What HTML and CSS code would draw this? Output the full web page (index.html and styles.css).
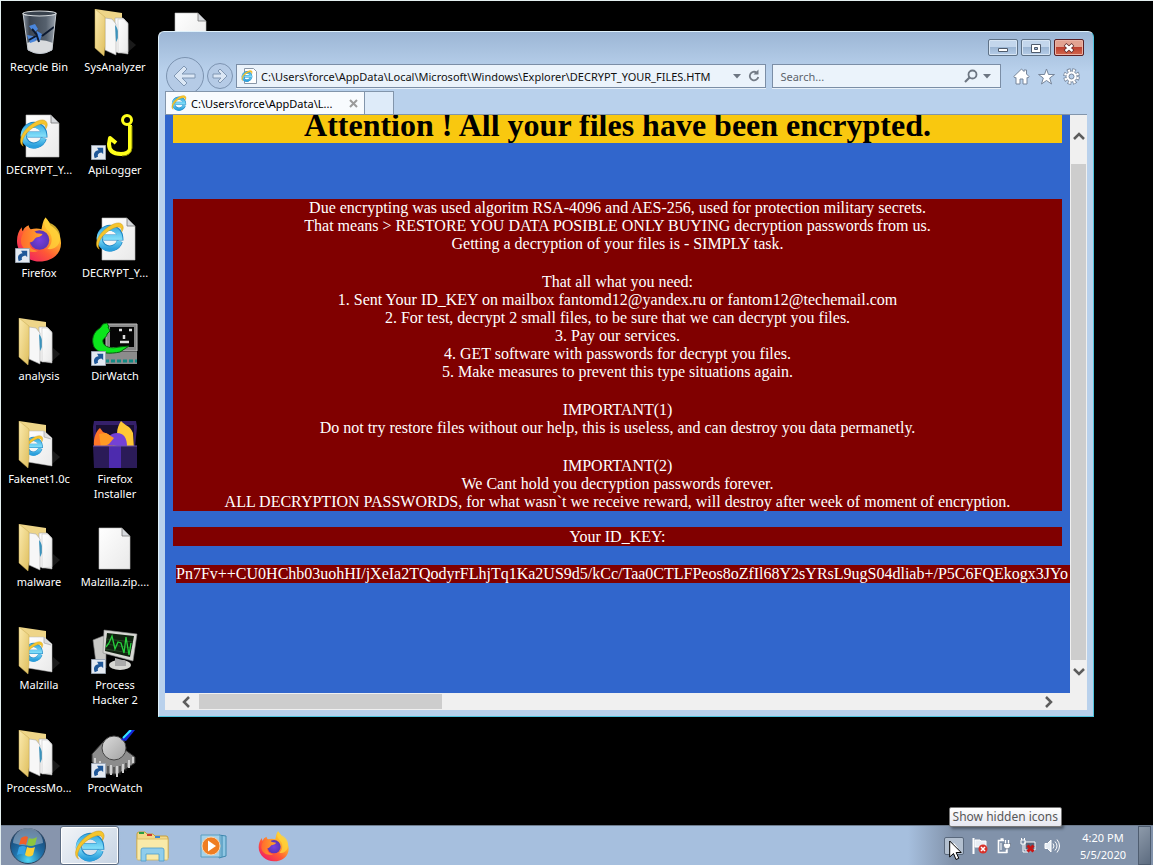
FILE: index.html
```html
<!DOCTYPE html>
<html lang="en">
<head>
<meta charset="utf-8">
<title>Desktop</title>
<link rel="stylesheet" href="styles.css">
</head>
<body>
<svg class="defs" width="0" height="0" aria-hidden="true">
  <defs>
    <linearGradient id="gFlap" x1="0" y1="0" x2="1" y2="1"><stop offset="0" stop-color="#fbeaae"/><stop offset="1" stop-color="#dfbf5e"/></linearGradient>
    <linearGradient id="gPaper" x1="0" y1="0" x2="1" y2="1"><stop offset="0" stop-color="#fff"/><stop offset="1" stop-color="#e9e9e9"/></linearGradient>
    <linearGradient id="gIe" x1="0" y1="0" x2="0" y2="1"><stop offset="0" stop-color="#3fb0e4"/><stop offset=".5" stop-color="#7fdcf8"/><stop offset="1" stop-color="#2b9fdc"/></linearGradient>
    <linearGradient id="gFox" x1="1" y1="0" x2=".2" y2="1"><stop offset="0" stop-color="#fff04a"/><stop offset=".35" stop-color="#ffb52a"/><stop offset=".65" stop-color="#ff5a35"/><stop offset="1" stop-color="#ef1b66"/></linearGradient>
    <linearGradient id="gFoxHead" x1="0" y1="0" x2="1" y2="0"><stop offset="0" stop-color="#ff6a2c"/><stop offset="1" stop-color="#ffa82b"/></linearGradient>
    <radialGradient id="gGlobe"><stop offset="0" stop-color="#7a3fe0"/><stop offset="1" stop-color="#5a35b5"/></radialGradient>
    <linearGradient id="gBin" x1="0" y1="0" x2="1" y2="0"><stop offset="0" stop-color="#87929f"/><stop offset=".2" stop-color="#3c4551"/><stop offset=".7" stop-color="#56616e"/><stop offset="1" stop-color="#9ba4ae"/></linearGradient>
    <radialGradient id="gOrb" cx=".5" cy=".9" r=".9"><stop offset="0" stop-color="#4fd6f4"/><stop offset=".45" stop-color="#1f6fa8"/><stop offset="1" stop-color="#173a63"/></radialGradient>
    <linearGradient id="gBall" x1="0" y1="0" x2="1" y2="1"><stop offset="0" stop-color="#dcdcdc"/><stop offset="1" stop-color="#a2a2a2"/></linearGradient>

    <symbol id="ie" viewBox="0 0 32 32">
      <path d="M26.500 20.500A11 11 0 1 1 27 16.500H9" fill="none" stroke="#1f86c4" stroke-width="6.400"/>
      <path d="M26.200 20.500A11 11 0 1 1 26.500 16.500H9" fill="none" stroke="url(#gIe)" stroke-width="5.400"/>
      <path d="M4.500 29C-2 25 3 13 13 6S29 0 30 5c.400 2-.500 4-1.500 5.500C29 5 25 4 18 7.500 8 12.500 1 23 4.500 29z" fill="#f6c52c" stroke="#c99412" stroke-width=".5"/>
    </symbol>
    <symbol id="page" viewBox="0 0 48 48">
      <path d="M8 4h23l8 8v33H8z" fill="url(#gPaper)" stroke="#b8b8b8" stroke-width=".6"/>
      <path d="M31 4v8h8z" fill="#d5d8dc" stroke="#777" stroke-width=".8"/>
    </symbol>
    <symbol id="htm" viewBox="0 0 48 48">
      <path d="M11 3h25l8 8v34H11z" fill="url(#gPaper)" stroke="#b8b8b8" stroke-width=".6"/>
      <path d="M36 3v8h8z" fill="#d5d8dc" stroke="#777" stroke-width=".8"/>
      <use href="#ie" x="4" y="7" width="30" height="30"/>
    </symbol>
    <symbol id="folderBack" viewBox="0 0 48 48">
      <path d="M36 44 45 36 38 30z" fill="#1a1a1a"/>
      <path d="M4 0 31 4v22L14 40z" fill="#eed588"/>
    </symbol>
    <symbol id="folderDocs" viewBox="0 0 48 48">
      <use href="#folderBack" width="48" height="48"/>
      <path d="M24 9h8l5 5v31l-13-2z" fill="#fafafa" stroke="#aaa" stroke-width=".6"/>
      <path d="M32 10v6l5 1" fill="#ddd" stroke="#aaa" stroke-width=".5"/>
      <path d="M14 9l7 1 4 5v31l-11-5z" fill="#f7f7f7" stroke="#aaa" stroke-width=".6"/>
      <path d="M24 16c5 6 4 13 1 17z" fill="#3a93bd"/>
      <path d="M27 10l6 0 4 5v28l-10 1z" fill="url(#gPaper)" stroke="#bbb" stroke-width=".5"/>
      <path d="M4 0 14 8v29l-1 10L4 39z" fill="url(#gFlap)" stroke="#c7a850" stroke-width=".5"/>
    </symbol>
    <symbol id="folderIe" viewBox="0 0 48 48">
      <use href="#folderBack" width="48" height="48"/>
      <path d="M13 10h16l8 7v28l-24-4z" fill="url(#gPaper)" stroke="#bbb" stroke-width=".5"/>
      <path d="M29 10v6l7 2" fill="#ddd" stroke="#999" stroke-width=".6"/>
      <use href="#ie" x="8" y="14" width="21" height="21"/>
      <path d="M4 0 14 8v29l-1 10L4 39z" fill="url(#gFlap)" stroke="#c7a850" stroke-width=".5"/>
    </symbol>
    <symbol id="shortcut" viewBox="0 0 16 16">
      <path d="M.5.5h15v15H.500z" fill="#e3e9f1" stroke="#9aa4b2"/>
      <path d="M4 14C2 9 4 6 8 5.500L6.500 3H13v6.500L11 8C8 8.500 6.500 10 7.500 12.500z" fill="#1f5798"/>
    </symbol>
    <symbol id="fox" viewBox="0 0 48 48">
      <path d="M30 2c3 3 4 5 5 8 5 3 11 9 11 18 0 12-10 19-22 19S1 38 1 26c0-6 2-11 5-14 0 2 0 3 1 4 1-3 3-5 6-6 0 2 1 3 2 4 4-1 8-1 11 0 1-4 1-8 4-12z" fill="url(#gFox)"/>
      <circle cx="24" cy="25" r="10" fill="url(#gGlobe)"/>
      <path d="M8 17c4-3 9-3 13 1l6 1c-1 3-5 3-7 4-2 2-3 5-6 4-1 5 3 9 9 9-9 4-18-2-18-10 0-3 1-6 3-9z" fill="url(#gFoxHead)"/>
      <path d="M30 2c-3 8 1 12 4 15 4 5 3 13-2 17 8 2 14-5 13-13 0-6-5-11-10-13-2-2-3-4-5-6z" fill="#ffd23a" opacity=".8"/>
    </symbol>
    <symbol id="foldersTask" viewBox="0 0 34 32">
      <path d="M2 4q0-2 2-2h6l2 2h6l2 2h11q2 0 2 2v20H2z" fill="#f2d98a" stroke="#c79f3b"/>
      <path d="M4 3h5" stroke="#2a9d3f" stroke-width="2"/><path d="M12 5h5" stroke="#d0392b" stroke-width="2"/><path d="M20 7h5" stroke="#3a86d1" stroke-width="2"/>
      <path d="M2 9h31v20q0 1-1 1H3q-1 0-1-1z" fill="#f9eaa9" stroke="#d6b55c" stroke-width=".8"/>
      <path d="M6 31V20q0-2 2-2h19q2 0 2 2v11h-5v-7H11v7z" fill="#8fcdec" stroke="#4c9ccc" stroke-width=".8"/>
    </symbol>
  </defs>
</svg>

<div class="screen">
  <main class="desktop">
    <div class="icons">
      <div class="item"><svg class="ico" viewBox="0 0 48 48"><path d="M8 4h33l-4 37q-12 8-24 0z" fill="url(#gBin)"/><path d="M12 34q12-6 26 0l-1 7q-12 7-24 0z" fill="#d8dadd"/><path d="M14 17l6-2 3 5-4 4zM22 22l5 3-2 7-6-2zM12 26l6 1 3 5-6 2z" fill="#4a86dc"/><path d="M17 20l5 6M14 31l7-4M24 33l-3-9M27 27l12-9" stroke="#0d1a30" stroke-width="2"/><path d="M8 4l5 37q12 7 24 0l4-37" fill="none" stroke="#c3c9cf"/><ellipse cx="24.500" cy="4.500" rx="16.500" ry="2.500" fill="#39424d" stroke="#d6dadd" stroke-width="1.200"/></svg><span>Recycle Bin</span></div>
      <div class="item"><svg class="ico"><use href="#htm" width="48" height="48"/></svg><span>DECRYPT_Y...</span></div>
      <div class="item"><svg class="ico" viewBox="0 0 48 48"><use href="#fox" x="1" width="47" height="48"/><use href="#shortcut" y="33" width="15" height="15"/></svg><span>Firefox</span></div>
      <div class="item"><svg class="ico"><use href="#folderDocs" width="48" height="48"/></svg><span>analysis</span></div>
      <div class="item"><svg class="ico"><use href="#folderIe" width="48" height="48"/></svg><span>Fakenet1.0c</span></div>
      <div class="item"><svg class="ico"><use href="#folderDocs" width="48" height="48"/></svg><span>malware</span></div>
      <div class="item"><svg class="ico"><use href="#folderIe" width="48" height="48"/></svg><span>Malzilla</span></div>
      <div class="item"><svg class="ico"><use href="#folderDocs" width="48" height="48"/></svg><span>ProcessMo...</span></div>
      <div class="item"><svg class="ico"><use href="#folderDocs" width="48" height="48"/></svg><span>SysAnalyzer</span></div>
      <div class="item"><svg class="ico" viewBox="0 0 48 48"><g fill="none" stroke="#ffff1a" stroke-linejoin="round"><circle cx="36" cy="8" r="4.500" stroke-width="3"/><path d="M39 13v24q-1 5-9 5-12 0-12-10l1-6 6 5" stroke-width="4"/></g><path d="M41 14v22q-1 8-10 8" stroke="#8a8a00" fill="none"/><use href="#shortcut" y="33" width="15" height="15"/></svg><span>ApiLogger</span></div>
      <div class="item"><svg class="ico"><use href="#htm" width="48" height="48"/></svg><span>DECRYPT_Y...</span></div>
      <div class="item"><svg class="ico" viewBox="0 0 48 48"><path d="M15 6h31v27H15z" fill="#888" stroke="#bbb"/><path d="M19 9h24v20H19z" fill="#050505"/><path d="M28 12h3M38 12h3M33 17v4M29 24h9" stroke="#ddd" stroke-width="2.500"/><path d="M14 34h32v12H14z" fill="#8c8c8c"/><path d="M14 43h32" stroke="#118a84" stroke-width="3" stroke-dasharray="4 2"/><path d="M18 9l-2-4-4 1-3 4C2 14 0 22 3 29c4 7 17 7 26 5l9-6-10 1c-8 2-15 0-16-5-1-4 4-4 4-8l3-3-2-4z" fill="#0be51c" stroke="#065e0c"/><use href="#shortcut" y="33" width="15" height="15"/></svg><span>DirWatch</span></div>
      <div class="item"><svg class="ico" viewBox="0 0 48 48"><path d="M3 0h42l1 6-2 20H3l-1-20z" fill="#35206b"/><path d="M5 4h38v22H5z" fill="#190f35"/><path d="M3 26C2 16 6 9 9 7l3 4 5 2 8 6v9z" fill="#ff7528"/><path d="M22 26c-1-8 1-11 4-13 0-6 2-10 4-13 4 5 9 4 12 12l1 16z" fill="#ffc835"/><path d="M16 24q0-12 10-12t10 14z" fill="#7441d6"/><path d="M8 13l7-1 8 5-5 6-8 4z" fill="#ff9a24"/><path d="M2 25h44v22H3z" fill="#2b1b58"/><path d="M18 25h12v22H18z" fill="#4d2bae"/><path d="M2 25h44" stroke="#6a55a8"/></svg><span class="wrap">Firefox Installer</span></div>
      <div class="item"><svg class="ico"><use href="#page" width="48" height="48"/></svg><span>Malzilla.zip....</span></div>
      <div class="item"><svg class="ico" viewBox="0 0 48 48"><path d="M2 13l10-4 3 1v31l-9 3z" fill="#c9c9c6" stroke="#777" stroke-width=".6"/><ellipse cx="29" cy="38" rx="11" ry="5" fill="#d7d7d3"/><path d="M24 31l11 3v5H24z" fill="#aaa"/><path d="M13 3l33 4-4 27-30-8z" fill="#d8d8d4" stroke="#888" stroke-width=".6"/><path d="M16 6l27 3-4 21-25-6z" fill="#10210f"/><path d="M15 12l27 3M15 17l26 4M14 22l25 4" stroke="#2a4d29" stroke-width=".8"/><path d="M15 20l3-4 3-7 3 13 3-7 3 1 3 10 2-16 3 18 2-12" fill="none" stroke="#26d13c" stroke-width="1.300"/><use href="#shortcut" y="32" width="15" height="15"/></svg><span class="wrap">Process Hacker 2</span></div>
      <div class="item"><svg class="ico" viewBox="0 0 48 48"><path d="M12 12L1 24v8l14 12h12l17-11v-6l-11-8z" fill="#8c8c8c" stroke="#333"/><path d="M4 28v6M9 31v6M14 34v8M20 35v10M26 36v11M32 34v9M38 30v8M42 27v6" stroke="#d0d0d0" stroke-width="2"/><path d="M17 36v8M23 37v9M29 36v9M35 33v8" stroke="#222"/><circle cx="23" cy="18" r="12" fill="url(#gBall)" stroke="#444"/><path d="M30 10L38 0h6l-9 11z" fill="#1326dc"/><path d="M32 8L40 0" stroke="#32e7ff" stroke-width="2"/><use href="#shortcut" y="33" width="15" height="15"/></svg><span>ProcWatch</span></div>
      <div class="item"><svg class="ico"><use href="#page" width="48" height="48"/></svg></div>
    </div>

    <section class="window" aria-label="Internet Explorer">
      <header class="titlebar">
        <button class="cap" aria-label="Minimize"><svg width="12" height="12" viewBox="0 0 12 12"><path d="M1.500 6.500h9v3h-9z" fill="#fff" stroke="#4f5b6c"/></svg></button>
        <button class="cap" aria-label="Restore"><svg width="12" height="12" viewBox="0 0 12 12"><path d="M1.500 2.500h9v8h-9z" fill="#fff" stroke="#4f5b6c"/><path d="M4.500 5.500h3v2h-3z" fill="#9db7d6" stroke="#4f5b6c"/></svg></button>
        <button class="cap close" aria-label="Close"><svg width="12" height="12" viewBox="0 0 12 12"><path d="M2 2.500l8 7M10 2.500l-8 7" stroke="#5e2a2a" stroke-width="4"/><path d="M2.500 3l7 6M9.500 3l-7 6" stroke="#fff" stroke-width="2.400"/></svg></button>
      </header>
      <nav class="navbar">
        <button class="round" aria-label="Back"><svg width="38" height="38" viewBox="0 0 38 38"><circle cx="19" cy="19" r="18.500" fill="#b5cbe6" stroke="#7c93b0"/><path d="M8 19l10-10 3 3-5 5h13v4H16l5 5-3 3z" fill="#dbe7f5" stroke="#8097b3"/></svg></button>
        <button class="round" aria-label="Forward"><svg width="26" height="26" viewBox="0 0 26 26"><circle cx="13" cy="13" r="12.500" fill="#b5cbe6" stroke="#7c93b0"/><path d="M20 13l-7-7-2 2 3 3H6v4h8l-3 3 2 2z" fill="#dbe7f5" stroke="#8097b3"/></svg></button>
        <div class="field address">
          <svg width="16" height="16" viewBox="0 0 16 16"><path d="M3.500.5h9l3 3v12h-12z" fill="#fff" stroke="#8997a8"/><use href="#ie" y="2" width="12" height="12"/></svg>
          <input aria-label="Address" value="C:\Users\force\AppData\Local\Microsoft\Windows\Explorer\DECRYPT_YOUR_FILES.HTM">
          <button class="list" aria-label="Show address list"><svg width="8" height="5" viewBox="0 0 8 5"><path d="M0 0h8L4 4.500z" fill="#6d7682"/></svg></button>
          <button aria-label="Refresh"><svg width="14" height="14" viewBox="0 0 14 14"><path d="M9.500 3.500A4.300 4.300 0 1 0 11.300 8" fill="none" stroke="#737b86" stroke-width="1.800"/><path d="M6.500 5.500h5V.500z" fill="#737b86"/></svg></button>
        </div>
        <div class="field search">
          <input aria-label="Search" placeholder="Search...">
          <button aria-label="Search"><svg width="14" height="14" viewBox="0 0 14 14"><circle cx="8.500" cy="5.500" r="4" fill="none" stroke="#6d7682" stroke-width="1.800"/><path d="M5.500 8.500L1 13" stroke="#6d7682" stroke-width="2.200"/></svg></button>
          <button aria-label="Search options"><svg width="8" height="5" viewBox="0 0 8 5"><path d="M0 0h8L4 4.500z" fill="#6d7682"/></svg></button>
        </div>
        <div class="tools">
          <button aria-label="Home"><svg width="17" height="17" viewBox="0 0 17 17"><path d="M8.500 1l2.500 2.500V2h2.500v4L16 8.500 15 10l-1-.500V16h-4v-5H7v5H3V9.500L2 10 .800 8.500z" fill="#fff" stroke="#76859a"/></svg></button>
          <button aria-label="Favorites"><svg width="17" height="17" viewBox="0 0 17 17"><path d="M8.500 1l2 5.500h6l-4.800 3.500L13.500 16l-5-3.500L3.500 16l1.800-6L.500 6.500h6z" fill="#fff" stroke="#76859a"/></svg></button>
          <button aria-label="Tools"><svg width="17" height="17" viewBox="0 0 17 17"><circle cx="8.500" cy="8.500" r="6.300" fill="none" stroke="#76859a" stroke-width="4" stroke-dasharray="3.350 1.598"/><circle cx="8.500" cy="8.500" r="5.500" fill="#fff" stroke="#76859a"/><circle cx="8.500" cy="8.500" r="6.300" fill="none" stroke="#fff" stroke-width="2.400" stroke-dasharray="2 2.948" stroke-dashoffset="-.7"/><circle cx="8.500" cy="8.500" r="2.500" fill="#b9d0ea" stroke="#76859a"/></svg></button>
        </div>
      </nav>
      <div class="tabs">
        <div class="tab"><svg width="16" height="16"><use href="#ie" width="16" height="16"/></svg><span>C:\Users\force\AppData\L...</span><button aria-label="Close tab"><svg width="9" height="9" viewBox="0 0 9 9"><path d="M1 1l7 7M8 1L1 8" stroke="#9b9b9b" stroke-width="2"/></svg></button></div>
        <button class="newtab" aria-label="New tab"></button>
      </div>
      <div class="viewport">
        <article class="page">
          <div class="banner"><h1>Attention ! All your files have been encrypted.</h1></div>
          <div class="note">
            <p>Due encrypting was used algoritm RSA-4096 and AES-256, used for protection military secrets.<br>That means &gt; RESTORE YOU DATA POSIBLE ONLY BUYING decryption passwords from us.<br>Getting a decryption of your files is - SIMPLY task.</p>
            <p>That all what you need:<br>1. Sent Your ID_KEY on mailbox fantomd12@yandex.ru or fantom12@techemail.com<br>2. For test, decrypt 2 small files, to be sure that we can decrypt you files.<br>3. Pay our services.<br>4. GET software with passwords for decrypt you files.<br>5. Make measures to prevent this type situations again.</p>
            <p>IMPORTANT(1)<br>Do not try restore files without our help, this is useless, and can destroy you data permanetly.</p>
            <p>IMPORTANT(2)<br>We Cant hold you decryption passwords forever.<br>ALL DECRYPTION PASSWORDS, for what wasn`t we receive reward, will destroy after week of moment of encryption.</p>
          </div>
          <div class="keytitle">Your ID_KEY:</div>
          <div class="key"><span>Pn7Fv++CU0HChb03uohHI/jXeIa2TQodyrFLhjTq1Ka2US9d5/kCc/Taa0CTLFPeos8oZfIl68Y2sYRsL9ugS04dliab+/P5C6FQEkogx3JYo</span></div>
        </article>
        <div class="vbar">
          <svg width="12" height="8" viewBox="0 0 12 8"><path d="M1 7l5-5 5 5" fill="none" stroke="#5c5c5c" stroke-width="2.500"/></svg>
          <div class="vthumb"></div>
          <svg width="12" height="8" viewBox="0 0 12 8"><path d="M1 1l5 5 5-5" fill="none" stroke="#5c5c5c" stroke-width="2.500"/></svg>
        </div>
        <div class="hbar">
          <svg width="10" height="12" viewBox="0 0 10 12"><path d="M8 1L3 6l5 5" fill="none" stroke="#5c5c5c" stroke-width="2.500"/></svg>
          <div class="htrack"><div class="hthumb"></div></div>
          <svg width="10" height="12" viewBox="0 0 10 12"><path d="M2 1l5 5-5 5" fill="none" stroke="#5c5c5c" stroke-width="2.500"/></svg>
        </div>
      </div>
    </section>
  </main>

  <footer class="taskbar">
    <button class="start" aria-label="Start"><svg width="38" height="38" viewBox="0 0 38 38"><circle cx="19" cy="19" r="17.500" fill="url(#gOrb)" stroke="#2c4560"/><path d="M4 16A15 15 0 0 1 34 16Q19 21 4 16z" fill="#b9c8d8" opacity=".5"/><path d="M12 11q4-3 7-1l-2 8q-3-2-7 0z" fill="#f0602a"/><path d="M20 11q4 2 8-1l-2 8q-4 2-8 0z" fill="#8cc63f"/><path d="M10 20q4-2 7 0l-2 8q-3-2-7 0z" fill="#35a3e6"/><path d="M18 20q4 2 8 0l-2 8q-4 3-8 0z" fill="#fdd034"/></svg></button>
    <button class="task active" aria-label="Internet Explorer"><svg width="32" height="32"><use href="#ie" width="32" height="32"/></svg></button>
    <button class="task" aria-label="Windows Explorer"><svg width="34" height="32"><use href="#foldersTask" width="34" height="32"/></svg></button>
    <button class="task" aria-label="Windows Media Player"><svg width="32" height="32" viewBox="0 0 32 32"><path d="M22 5l7 1v20l-7 2z" fill="#8fc7e4" stroke="#3e87ad"/><path d="M25 5v22" stroke="#3e87ad"/><path d="M4 5h19v22H4z" fill="#a5d2ea" stroke="#5b9dc0"/><circle cx="14" cy="16" r="9" fill="#ef7d22" stroke="#fbd3ab"/><path d="M11 10.500l8 5.500-8 5.500z" fill="#fff"/></svg></button>
    <button class="task" aria-label="Firefox"><svg width="32" height="32"><use href="#fox" width="32" height="32"/></svg></button>
    <div class="tray">
      <button class="hidden-icons" aria-label="Show hidden icons"><svg width="8" height="5" viewBox="0 0 8 5"><path d="M0 5h8L4 0z" fill="#fff"/></svg></button>
      <svg width="16" height="16" viewBox="0 0 16 16"><path d="M1.500 0v16" stroke="#fff" stroke-width="2"/><path d="M3 2h5l1 1h5v7H9L8 9H3z" fill="#e9eef5" stroke="#fff"/><circle cx="11" cy="11" r="4.500" fill="#d8322b"/><path d="M9 9l4 4M13 9l-4 4" stroke="#fff" stroke-width="1.500"/></svg>
      <svg width="16" height="16" viewBox="0 0 16 16"><path d="M8 2.500H2.500v12h8V12M4.500 1h3" fill="none" stroke="#fff" stroke-width="1.600"/><path d="M5 5v7" stroke="#fff"/><path d="M7.500 5.500h7v2q0 3-3.500 3.500-3.500-.500-3.500-3.500z" fill="#fff" stroke="#4f5d70" stroke-width=".6"/><path d="M9.500 5.500V2M12.500 5.500V2M11 11v4" stroke="#fff" stroke-width="1.300"/></svg>
      <svg width="16" height="16" viewBox="0 0 16 16"><path d="M5 4h10v8H5z" fill="#56647a" stroke="#fff"/><path d="M1 2h4v4H1zM3 6v8h5M1.500 0v2M4.500 0v2" fill="none" stroke="#fff"/><path d="M7.500 7.500l6 6M13.500 7.500l-6 6" stroke="#c81414" stroke-width="3"/></svg>
      <svg width="16" height="16" viewBox="0 0 16 16"><path d="M1 5.500h2.500L7 2v12l-3.500-3.500H1z" fill="#e6edf5" stroke="#fff"/><path d="M9 5.500q2 2.500 0 5M11 3.500q4 4.500 0 9M13 1.500q5 6.500 0 13" fill="none" stroke="#fff"/></svg>
      <div class="clock"><span>4:20 PM</span><span>5/5/2020</span></div>
      <button class="peek" aria-label="Show desktop"></button>
    </div>
    <div class="tip" role="tooltip">Show hidden icons</div>
    <svg class="cursor" width="13" height="21" viewBox="0 0 13 21"><path d="M.7 1v16l3.800-3.500L7 19.500l2.800-1.200-2.600-5.800h5z" fill="#fff" stroke="#000"/></svg>
  </footer>
</div>
</body>
</html>
```

FILE: styles.css
```css
* { box-sizing: border-box; }

body {
  margin: 0;
  background: #000;
  font-family: "Noto Sans", "Open Sans", sans-serif;
  font-size: 12px;
  overflow: hidden;
}

button {
  margin: 0;
  padding: 0;
  border: 0;
  background: none;
  font: inherit;
  display: flex;
  align-items: center;
  justify-content: center;
}

svg { display: block; flex: none; }
.defs { position: absolute; }

.screen {
  display: flex;
  flex-direction: column;
  height: 100vh;
  border-top: 1px solid #e4eff0;
  border-left: 1px solid #e4eff0;
}

.desktop { position: relative; flex: 1; min-height: 0; }

.icons {
  display: grid;
  grid-auto-flow: column;
  grid-template-rows: repeat(8, 103px);
  grid-auto-columns: 76px;
  justify-content: start;
  padding-top: 2px;
}

.item {
  display: flex;
  flex-direction: column;
  align-items: center;
  padding-top: 6px;
  color: #fff;
  font-size: 11px;
  line-height: 15px;
  text-align: center;
}

.item span { margin-top: 2px; white-space: nowrap; }
.item .wrap { white-space: normal; max-width: 60px; }
.ico { width: 48px; height: 48px; }

.window {
  position: absolute;
  left: 157px;
  right: 59px;
  top: 30px;
  bottom: 108px;
  display: flex;
  flex-direction: column;
  padding: 1px 6px 6px;
  border: 1px solid #dff1fb;
  border-right-color: #4fc3dd;
  border-bottom-color: #4fc3dd;
  border-radius: 6px 6px 0 0;
  background: linear-gradient(#9cb6d5, #b9d1ec 40px);
}

.titlebar {
  display: flex;
  justify-content: flex-end;
  gap: 3px;
  height: 23px;
  padding: 6px 3px 0 0;
}

.cap {
  width: 30px;
  height: 17px;
  border: 1px solid #5f7287;
  border-radius: 2px;
  background: linear-gradient(#c3d6ec 45%, #9cb6d4 50%, #b6cde8);
  box-shadow: inset 0 0 0 1px #d7e5f4;
}

.close {
  background: linear-gradient(#e2a291 45%, #bd4030 50%, #d2674e);
  border-color: #5b1f24;
  box-shadow: inset 0 0 0 1px #eab3a6;
}

.navbar {
  display: flex;
  align-items: center;
  height: 40px;
  padding: 0 7px 0 1px;
}

.round { margin-right: 3px; }

.field {
  display: flex;
  align-items: center;
  height: 24px;
  border: 1px solid #7b8ea6;
  background: #ebf3fb;
  box-shadow: 0 1px 0 #e7f0f9;
}

.field input {
  flex: 1;
  min-width: 0;
  padding: 0;
  border: 0;
  outline: 0;
  background: none;
  font-family: "Noto Sans", "Open Sans", sans-serif;
  font-size: 11px;
  color: #111;
}

.field input::placeholder { color: #5d636b; opacity: 1; }
.address { flex: 519; padding: 0 4px; gap: 4px; }
.list { margin: 0 2px 0 4px; }
.search { flex: 210; margin-left: 6px; padding: 0 9px 0 7px; gap: 5px; }
.tools { display: flex; gap: 8px; margin-left: 12px; }

.tabs {
  position: relative;
  display: flex;
  height: 24px;
  margin-top: -5px;
  border-bottom: 1px solid #8295ab;
}

.tab {
  display: flex;
  align-items: center;
  width: 200px;
  padding: 0 6px 0 5px;
  gap: 4px;
  border: 1px solid #8295ab;
  border-bottom: 0;
  background: #f8fbfe;
  font-size: 11px;
}

.tab span { flex: 1; white-space: nowrap; }

.newtab {
  width: 29px;
  border: 1px solid #8295ab;
  border-left: 0;
  border-bottom: 0;
  background: #deebf9;
}

.viewport {
  flex: 1;
  min-height: 0;
  display: grid;
  grid-template-columns: 1fr 17px;
  grid-template-rows: 1fr 17px;
  background: #f0f0f0;
}

.page {
  min-width: 0;
  overflow: hidden;
  padding: 0 8px;
  background: #3166cc;
  color: #fff;
  font-family: "Liberation Serif", serif;
  font-size: 16px;
  line-height: 18px;
  text-align: center;
}

.banner {
  padding-bottom: 8px;
  background: #f9c80f;
  color: #000;
}

.banner h1 { margin: 0; font-size: 32px; line-height: 20px; white-space: nowrap; }

.note {
  display: flex;
  flex-direction: column;
  gap: 20px;
  margin-top: 56px;
  background: #800000;
}

.note p { margin: 0; }

.keytitle { margin-top: 16px; background: #800000; line-height: 19px; }
.key { margin: 19px 0 0 3px; text-align: left; white-space: nowrap; }
.key span { display: inline-block; padding-right: 8px; background: #800000; }

.vbar, .hbar { display: flex; align-items: center; }
.vbar { flex-direction: column; padding: 17px 0; gap: 24px; }
.vthumb { flex: 1; width: 15px; background: #cdcdcd; }
.vbar svg:last-child { margin-top: -16px; }
.hbar { padding: 0 16px; gap: 8px; }
.htrack { flex: 1; }
.hthumb { width: 29%; height: 15px; background: #cdcdcd; }

.taskbar {
  position: relative;
  display: flex;
  height: 40px;
  border-top: 1px solid #6d7b8d;
  background: linear-gradient(90deg, #8795ad 60px, #a6bfde 120px, #a6bfde calc(100% - 245px), #8192aa calc(100% - 200px));
}

.start { width: 59px; padding-right: 5px; }
.task { width: 59px; margin-right: 2px; padding-left: 3px; }

.active {
  padding-left: 0;
  border: 1px solid #5c6c82;
  border-radius: 3px;
  background: linear-gradient(135deg, #f2f5f8, #c6d3e3);
  box-shadow: inset 0 0 0 1px #fff;
}

.tray {
  display: flex;
  align-items: center;
  gap: 8px;
  margin-left: auto;
  color: #fff;
}

.hidden-icons {
  width: 20px;
  height: 18px;
  border: 1px solid #59687c;
  border-radius: 2px;
  background: #b3c0d0;
}

.clock {
  display: flex;
  flex-direction: column;
  align-items: center;
  width: 54px;
  margin-left: 8px;
  line-height: 17px;
  font-size: 11px;
}

.peek {
  align-self: stretch;
  width: 13px;
  margin-right: 2px;
  border: 1px solid #4f5d70;
  background: linear-gradient(135deg, #8d9aaa, #5d6c80);
}

.tip {
  position: absolute;
  right: 91px;
  top: -19px;
  padding: 0 3px;
  border: 1px solid #767676;
  border-radius: 2px;
  background: linear-gradient(#fff, #e6e7f0);
  box-shadow: 2px 2px 3px #0006;
  color: #575757;
  font-size: 12px;
  line-height: 18px;
}

.cursor { position: absolute; right: 191px; top: 14px; }
```
